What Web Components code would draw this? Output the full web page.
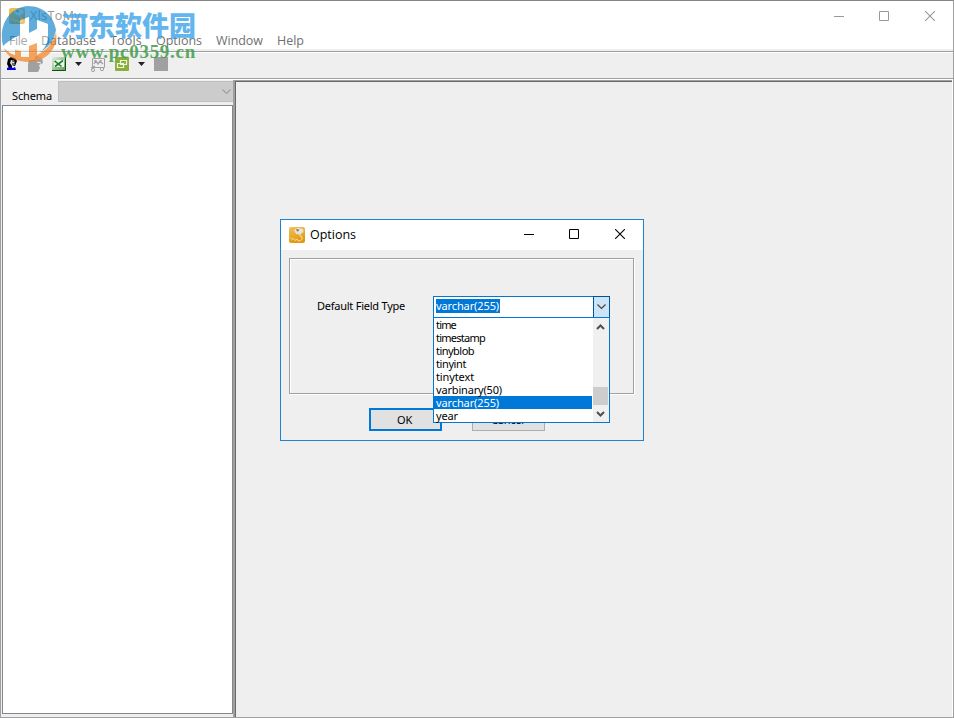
<!DOCTYPE html>
<html lang="en">
<head>
<meta charset="utf-8">
<title>XlsToMy</title>
<style>
    body {
        margin: 0;
        width: 954px;
        height: 718px;
        overflow: hidden;
        position: relative;
        background: #efefef;
        font-family: "Noto Sans", "Open Sans", sans-serif;
        font-size: 11px;
        color: #000;
    }
    app-window > menu-bar fit-text { color: #707070; }
</style>
</head>
<body>
<app-window>
    <title-bar slot="title" class="main">
        <app-icon slot="icon"></app-icon>
        <fit-text w="51">XlsToMy</fit-text>
    </title-bar>
    <menu-bar slot="menu">
        <fit-text w="18">File</fit-text>
        <fit-text w="55">Database</fit-text>
        <fit-text w="32">Tools</fit-text>
        <fit-text w="46">Options</fit-text>
        <fit-text w="47">Window</fit-text>
        <fit-text w="27">Help</fit-text>
    </menu-bar>
    <tool-bar slot="tools"></tool-bar>
    <schema-panel slot="side"></schema-panel>
</app-window>

<options-dialog>
    <title-bar slot="title">
        <app-icon slot="icon"></app-icon>
        <fit-text w="46">Options</fit-text>
    </title-bar>
    <fit-text slot="label" w="88">Default Field Type</fit-text>
    <combo-box slot="field">
        <fit-text slot="value" w="63">varchar(255)</fit-text>
        <fit-text w="20">time</fit-text>
        <fit-text w="49">timestamp</fit-text>
        <fit-text w="38">tinyblob</fit-text>
        <fit-text w="30">tinyint</fit-text>
        <fit-text w="38">tinytext</fit-text>
        <fit-text w="66">varbinary(50)</fit-text>
        <fit-text w="63" class="selected">varchar(255)</fit-text>
        <fit-text w="22">year</fit-text>
    </combo-box>
    <push-button slot="buttons" class="default"><fit-text w="15">OK</fit-text></push-button>
    <push-button slot="buttons"><fit-text w="33">Cancel</fit-text></push-button>
</options-dialog>

<site-watermark></site-watermark>

<script>
// Base: puts the markup in an open shadow root
class BaseElement extends HTMLElement {
    constructor() {
        super();
        this.attachShadow({ mode: 'open' });
        this.shadowRoot.innerHTML = this.constructor.markup;
    }
}

// Text spaced to a fixed width
class FitText extends BaseElement {
    static markup = `
        <style>
            :host { display: block; white-space: nowrap; }
            span { display: inline-block; }
        </style>
        <span><slot></slot></span>`;

    connectedCallback() {
        const span = this.shadowRoot.querySelector('span');
        const want = Number(this.getAttribute('w'));
        this.style.width = want + 'px';
        const count = this.textContent.length;
        const have = span.getBoundingClientRect().width;
        span.style.letterSpacing = ((want - have) / count).toFixed(3) + 'px';
    }
}

// Application icon
class AppIcon extends BaseElement {
    static markup = `
        <style>
            :host { display: block; width: 16px; height: 16px; }
            svg { display: block; }
        </style>
        <svg width="16" height="16" viewBox="0 0 16 16">
            <defs>
                <linearGradient id="g" x1="0" y1="0" x2="0.3" y2="1">
                    <stop offset="0" stop-color="#efc25b"/>
                    <stop offset="1" stop-color="#e3980f"/>
                </linearGradient>
            </defs>
            <rect width="16" height="16" rx="2" fill="url(#g)"/>
            <path d="M5 3 L9 0.8 L14 2 L14.5 5 L11 7.5 L7 7 Z" fill="#e6e2dc"/>
            <path d="M7 2.3 L9.5 2 L10 4 L8 4.5 Z" fill="#9a7467"/>
            <path d="M11 7 C10 9 13 9 13 11" stroke="#f3dfb4" stroke-width="1.2" fill="none"/>
            <path d="M1 10.500 L3 12.500 L4.500 11.500 L6 13.500 L8 12 L9 14 L12 13.500 L13.500 11" stroke="#f8dfa6" stroke-width=".9" fill="none"/>
        </svg>`;
}

// Caption with icon, title and the three window buttons
class TitleBar extends BaseElement {
    static markup = `
        <style>
            :host {
                display: flex;
                align-items: center;
                height: 30px;
                background: #fff;
                font: 12.5px/20px "Open Sans", sans-serif;
                padding: 0 18px 0 8px;
                box-sizing: border-box;
                gap: 5px;
                color: #000;
            }
            :host(.main) { color: #999; }
            .buttons { margin: -2px 0 0 auto; display: flex; }
            :host(.main) .buttons { margin-top: 0; }
            svg { display: block; stroke: currentColor; fill: none; margin-left: 36px; }
            svg:nth-child(2) { margin-left: 35px; }
        </style>
        <slot name="icon"></slot>
        <slot></slot>
        <div class="buttons">
            <svg width="10" height="10" viewBox="0 0 10 10"><path d="M0 5.5 H10"/></svg>
            <svg width="10" height="10" viewBox="0 0 10 10"><path d="M0.5 0.5 H9.5 V9.5 H0.5 Z"/></svg>
            <svg width="10" height="10" viewBox="0 0 10 10"><path d="M0 0 L10 10 M10 0 L0 10" stroke-width="1.1"/></svg>
        </div>`;
}

// Menu row
class MenuBar extends BaseElement {
    static markup = `
        <style>
            :host {
                display: flex;
                align-items: center;
                gap: 14px;
                box-sizing: border-box;
                height: 18px;
                padding: 2px 0 0 8px;
                background: #fff;
                font: 12.5px/18px "Open Sans", sans-serif;
            }
        </style>
        <slot></slot>`;
}

// Toolbar
class ToolBar extends BaseElement {
    static markup = `
        <style>
            :host {
                display: flex;
                box-sizing: border-box;
                height: 31px;
                padding: 0 0 0 3px;
                border-top: 2px solid #efefef;
                background: linear-gradient(#a0a0a0 1px, #fff 1px, #fff 2px, #efefef 2px);
            }
            svg { display: block; margin-top: 4px; }
        </style>
        <svg width="180" height="20" viewBox="4 55 180 20">
            <defs>
                <linearGradient id="xl" x1="0" y1="0" x2="1" y2="1">
                    <stop offset="0" stop-color="#e2eedd"/>
                    <stop offset="1" stop-color="#5f9a56"/>
                </linearGradient>
            </defs>
            <g>
                <path d="M8 59 L11 57 L15 58 L17 61 L15 66 L12 66 L12 69 L9 68 L7 64 Z" fill="#000"/>
                <path d="M11 60 L14 60 L15 65 L12 66 L10 63 Z" fill="#d9d9d9"/>
                <path d="M13 60 V62 M12 64 H15" stroke="#000"/>
                <path d="M7 70 V68 L9 67 L13 68 L15 67 L16 70 Z" fill="#0000e8"/>
            </g>
            <g fill="#a0a0a0">
                <path d="M29 60 L34 60 L36 56 L42 58 L43 63 L39 65 L40 68 L38 72 L28 72 L28 64 Z"/>
                <path d="M35 60 L38 58 L41 59 M37 62 L41 63" stroke="#efefef" fill="none"/>
            </g>
            <g>
                <rect x="52" y="57" width="14" height="14" fill="url(#xl)"/>
                <path d="M52 70.5 H65.5 V57" stroke="#0b5413" fill="none"/>
                <path d="M54 60 H64 V67 H54 Z" fill="#edf6ea"/>
                <path d="M54.500 60.800 L61.500 66.500 M63 60.500 L55 66.500" stroke="#188032" stroke-width="1.6"/>
            </g>
            <path d="M75 62 H82 L78.5 66 Z" fill="#222"/>
            <g fill="none" stroke="#a0a0a0">
                <path d="M92.500 58.500 H104.500 V67.500 H92.500 Z"/>
                <path d="M94 64 L96 61 L98 64 L100 61 L103 64 M91 68 L95 66 M95 60 V62 M101 60 V61" stroke-width="1.3"/>
                <circle cx="93" cy="70" r="1.600"/><circle cx="102" cy="69" r="1.700"/>
            </g>
            <g>
                <rect x="115" y="57" width="14" height="14" rx="1" fill="#8aae3c"/>
                <path d="M120.500 60.500 H126.500 V64.500 H120.500 Z M117.500 63.500 H123.500 V67.500 H117.500 Z" fill="#8aae3c" stroke="#eef6d9" stroke-width="1.200"/>
            </g>
            <path d="M138 62 H145 L141.500 66 Z" fill="#222"/>
            <rect x="154" y="57" width="14" height="14" fill="#a0a0a0"/>
        </svg>`;
}

// Left panel with the schema selector and an empty tree
class SchemaPanel extends BaseElement {
    static markup = `
        <style>
            :host { display: flex; flex-direction: column; width: 232px; box-sizing: border-box; padding: 1px 0 3px 1px; }
            .row { display: flex; height: 24px; }
            fit-text { margin: 6px 6px 0 10px; line-height: 17px; font-size: 11px; }
            .combo {
                flex: 1;
                display: flex;
                align-items: center;
                justify-content: flex-end;
                box-sizing: border-box;
                height: 21px;
                background: #ccc;
                border: 1px solid #bfbfbf;
                border-right: 0;
                padding-right: 2px;
            }
            .tree { flex: 1; background: #fff; border: 1px solid #828790; }
        </style>
        <div class="row">
            <fit-text w="40">Schema</fit-text>
            <div class="combo">
                <svg width="9" height="6" viewBox="0 0 9 6"><path d="M0.500 0.500 L4.500 4.500 L8.500 0.500" fill="none" stroke="#a0a0a0" stroke-width="1.200"/></svg>
            </div>
        </div>
        <div class="tree"></div>`;
}

// Main frame
class AppWindow extends BaseElement {
    static markup = `
        <style>
            :host {
                display: flex;
                flex-direction: column;
                box-sizing: border-box;
                width: 954px;
                height: 718px;
                border: 1px solid #a0a0a0;
                border-top-color: #858585;
                background: #efefef;
            }
            .body { flex: 1; display: flex; border-top: 1px solid #fff; box-shadow: 0 -1px #a0a0a0; margin-top: -1px; }
            .mdi {
                flex: 1;
                box-sizing: border-box;
                margin-right: 1px;
                border: solid #a0a0a0;
                border-width: 1px 0 0 2px;
                box-shadow: inset 1px 1px #696969, 1px 0 #fff;
            }
        </style>
        <slot name="title"></slot>
        <slot name="menu"></slot>
        <slot name="tools"></slot>
        <div class="body">
            <slot name="side"></slot>
            <div class="mdi"></div>
        </div>`;
}

// Combo box with its list open
class ComboBox extends BaseElement {
    static markup = `
        <style>
            :host { display: block; position: relative; width: 177px; height: 22px; line-height: 13px; }
            .edit { display: flex; box-sizing: border-box; height: 22px; background: #fff; border: 1px solid #0078d7; }
            .value { background: #0078d7; color: #fff; margin: 2px auto 4px 2px; width: 64px; height: 14px; }
            .drop {
                display: flex;
                align-items: center;
                justify-content: center;
                box-sizing: border-box;
                width: 17px;
                margin: -1px -1px -1px 0;
                background: #cce4f7;
                border: 1px solid #005499;
            }
            /* the list lies over the group box and the buttons */
            .list {
                position: absolute;
                left: 0;
                top: 21px;
                z-index: 2;
                display: flex;
                box-sizing: border-box;
                width: 177px;
                height: 106px;
                background: #fff;
                border: 1px solid #0078d7;
            }
            .items { flex: 1; margin-right: 1px; }
            ::slotted(fit-text:not([slot])) { height: 13px; padding-left: 2px; }
            ::slotted(.selected) { background: #0078d7; color: #fff; box-sizing: border-box; width: 158px !important; }
            .scroll { width: 16px; background: #f0f0f0; display: flex; flex-direction: column; align-items: center; }
            .thumb { width: 15px; height: 18px; background: #cdcdcd; margin: 56px 1px 0 0; }
            svg { display: block; fill: none; }
            .scroll svg { margin: 6px 1px 0 0; stroke: #505050; stroke-width: 2; }
        </style>
        <div class="edit">
            <div class="value"><slot name="value"></slot></div>
            <div class="drop"><svg width="9" height="6" viewBox="0 0 9 6"><path d="M0.500 0.500 L4.500 4.500 L8.500 0.500" stroke="#444" stroke-width="1.200"/></svg></div>
        </div>
        <div class="list">
            <div class="items"><slot></slot></div>
            <div class="scroll">
                <svg width="9" height="7" viewBox="0 0 9 7"><path d="M1 5 L4.500 1.500 L8 5"/></svg>
                <div class="thumb"></div>
                <svg width="9" height="7" viewBox="0 0 9 7"><path d="M1 1 L4.500 4.500 L8 1"/></svg>
            </div>
        </div>`;
}

// Button
class PushButton extends BaseElement {
    static markup = `
        <style>
            :host {
                display: flex;
                align-items: center;
                justify-content: center;
                box-sizing: border-box;
                width: 73px;
                height: 23px;
                padding-right: 2px;
                background: #e1e1e1;
                border: 1px solid #adadad;
                line-height: 15px;
            }
            :host(.default) { border: 2px solid #0078d7; }
        </style>
        <slot></slot>`;
}

// Options dialog, floats over the main frame
class OptionsDialog extends BaseElement {
    static markup = `
        <style>
            :host {
                position: absolute;
                left: 280px;
                top: 219px;
                box-sizing: border-box;
                width: 364px;
                height: 222px;
                border: 1px solid #1883d7;
                background: #efefef;
            }
            .group {
                display: flex;
                align-items: flex-start;
                box-sizing: border-box;
                height: 136px;
                margin: 8px 9px 0 8px;
                padding: 37px 0 0 27px;
                border: 1px solid #a0a0a0;
                box-shadow: inset 1px 1px #fff, 1px 1px #fff;
                gap: 28px;
            }
            ::slotted([slot=label]) { margin-top: 2px; line-height: 16px; }
            .buttons { display: flex; gap: 30px; padding: 14px 0 0 88px; }
        </style>
        <slot name="title"></slot>
        <div class="group">
            <slot name="label"></slot>
            <slot name="field"></slot>
        </div>
        <div class="buttons"><slot name="buttons"></slot></div>`;
}

// Site mark laid over the top left corner
class SiteWatermark extends BaseElement {
    static markup = `
        <style>
            :host { position: absolute; left: 0; top: 0; width: 200px; height: 66px; pointer-events: none; }
            .mark { position: absolute; left: 0; top: 0; }
            .names { position: absolute; left: 61px; top: 9px; }
            .cn { font: 900 27px/31px "Noto Sans CJK SC", sans-serif; color: #48a9ec; opacity: .85; }
            .url { font: bold 19px/20px "Liberation Serif", serif; color: #3f9d4c; margin-top: 2px; opacity: .85; }
        </style>
        <svg class="mark" width="60" height="66" viewBox="0 0 60 66">
            <!-- blue upper half, cut by the left and right posts -->
            <path d="M3 46 C-2 26 9 7 28 6 C44 6 54 17 56 30 C54 40 50 46 42 51 C46 46 48 41 48 35 V24 L37 20 V29 L29 33 V17 L20 20 V35 C13 38 7 42 3 46 Z" fill="#1586cc" opacity=".68"/>
            <!-- orange lower half -->
            <path d="M4 48 C8 52 11 54 15 55 V50 L21 51 V57 H29 V46 L37 43 V55 C47 50 54 42 56 32 C59 48 46 62 29 62 C16 62 7 57 4 48 Z" fill="#f58220" opacity=".7"/>
            <path d="M20 21 L29 17 V33 L37 29 V20 L48 24 V36 C48 42 45 49 37 54 V42 L29 46 V56 H21 V51 L15 50 V55 C11 54 8 52 5 47 C8 41 14 38 20 35 Z" fill="#fff" opacity=".4"/>
        </svg>
        <div class="names">
            <fit-text class="cn" w="135">河东软件园</fit-text>
            <fit-text class="url" w="135">www.pc0359.cn</fit-text>
        </div>`;
}

customElements.define('app-icon', AppIcon);
customElements.define('title-bar', TitleBar);
customElements.define('menu-bar', MenuBar);
customElements.define('tool-bar', ToolBar);
customElements.define('schema-panel', SchemaPanel);
customElements.define('combo-box', ComboBox);
customElements.define('push-button', PushButton);
customElements.define('options-dialog', OptionsDialog);
customElements.define('site-watermark', SiteWatermark);
customElements.define('app-window', AppWindow);
// last, so that each text is measured in its final font
customElements.define('fit-text', FitText);
</script>
</body>
</html>
